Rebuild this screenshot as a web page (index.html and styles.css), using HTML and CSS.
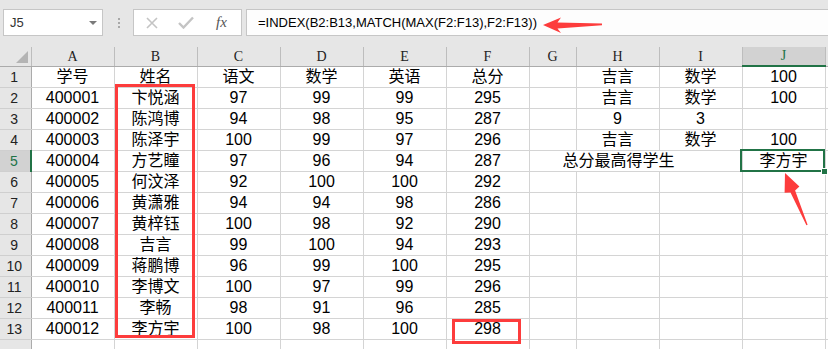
FILE: index.html
```html
<!DOCTYPE html>
<html lang="zh-CN">
<head>
    <meta charset="UTF-8">
    <title>总分最高得学生</title>
    <link rel="stylesheet" href="styles.css">
</head>
<body>
    <div class="toolbar">
        <div class="name-box">
            <span>J5</span>
            <span class="drop"></span>
        </div>
        <div class="grip"><i></i><i></i><i></i></div>
        <div class="fx-buttons">
            <svg class="icon" width="12" height="12" viewBox="0 0 12 12"><path d="M1 1L11 11M11 1L1 11" stroke="#c4c4c4" stroke-width="1.6" fill="none"/></svg>
            <svg class="icon" width="16" height="13" viewBox="0 0 16 13"><path d="M1 7L5.5 11.5L15 1.5" stroke="#c4c4c4" stroke-width="2.4" fill="none"/></svg>
            <span class="fx">fx</span>
        </div>
        <div class="formula">=INDEX(B2:B13,MATCH(MAX(F2:F13),F2:F13))</div>
    </div>

    <table class="sheet">
        <colgroup>
            <col class="c-rh"><col class="c-w"><col class="c-w"><col class="c-w"><col class="c-w"><col class="c-w"><col class="c-w">
            <col class="c-g"><col class="c-w"><col class="c-w"><col class="c-w"><col class="c-w">
        </colgroup>
        <thead>
            <tr>
                <th class="corner"><span class="tri"></span></th>
                <th>A</th><th>B</th><th>C</th><th>D</th><th>E</th><th>F</th><th>G</th><th>H</th><th>I</th><th class="sel-col">J</th><th></th>
            </tr>
        </thead>
        <tbody>
            <tr><td class="rh">1</td><td>学号</td><td>姓名</td><td>语文</td><td>数学</td><td>英语</td><td>总分</td><td></td><td>吉言</td><td>数学</td><td>100</td><td></td></tr>
            <tr><td class="rh">2</td><td>400001</td><td>卞悦涵</td><td>97</td><td>99</td><td>99</td><td>295</td><td></td><td>吉言</td><td>数学</td><td>100</td><td></td></tr>
            <tr><td class="rh">3</td><td>400002</td><td>陈鸿博</td><td>94</td><td>98</td><td>95</td><td>287</td><td></td><td>9</td><td>3</td><td></td><td></td></tr>
            <tr><td class="rh">4</td><td>400003</td><td>陈泽宇</td><td>100</td><td>99</td><td>97</td><td>296</td><td></td><td>吉言</td><td>数学</td><td>100</td><td></td></tr>
            <tr><td class="rh sel-row">5</td><td>400004</td><td>方艺瞳</td><td>97</td><td>96</td><td>94</td><td>287</td><td colspan="3" class="label">总分最高得学生</td><td>李方宇</td><td></td></tr>
            <tr><td class="rh">6</td><td>400005</td><td>何汶泽</td><td>92</td><td>100</td><td>100</td><td>292</td><td></td><td></td><td></td><td></td><td></td></tr>
            <tr><td class="rh">7</td><td>400006</td><td>黄潇雅</td><td>94</td><td>94</td><td>98</td><td>286</td><td></td><td></td><td></td><td></td><td></td></tr>
            <tr><td class="rh">8</td><td>400007</td><td>黄梓钰</td><td>100</td><td>98</td><td>92</td><td>290</td><td></td><td></td><td></td><td></td><td></td></tr>
            <tr><td class="rh">9</td><td>400008</td><td>吉言</td><td>99</td><td>100</td><td>94</td><td>293</td><td></td><td></td><td></td><td></td><td></td></tr>
            <tr><td class="rh">10</td><td>400009</td><td>蒋鹏博</td><td>96</td><td>99</td><td>100</td><td>295</td><td></td><td></td><td></td><td></td><td></td></tr>
            <tr><td class="rh">11</td><td>400010</td><td>李博文</td><td>100</td><td>97</td><td>99</td><td>296</td><td></td><td></td><td></td><td></td><td></td></tr>
            <tr><td class="rh">12</td><td>400011</td><td>李畅</td><td>98</td><td>91</td><td>96</td><td>285</td><td></td><td></td><td></td><td></td><td></td></tr>
            <tr><td class="rh">13</td><td>400012</td><td>李方宇</td><td>100</td><td>98</td><td>100</td><td>298</td><td></td><td></td><td></td><td></td><td></td></tr>
            <tr><td class="rh"></td><td></td><td></td><td></td><td></td><td></td><td></td><td></td><td></td><td></td><td></td><td></td></tr>
        </tbody>
    </table>

    <!-- annotations drawn over the sheet -->
    <div class="mark box-names"></div>
    <div class="mark box-total"></div>
    <div class="selection"><span class="handle"></span></div>
    <svg class="arrows" width="828" height="349" viewBox="0 0 828 349">
        <polygon points="543,25 561,17.5 557.5,22.5 602,23.6 602,25.2 557.5,28.5 561,33" fill="#fd3c3c"/>
        <polygon points="785,173 799.4,186.5 795.1,190.4 807.6,224.7 806.4,225.3 790.5,192.4 784.6,192.7" fill="#fd3c3c"/>
    </svg>
</body>
</html>
```

FILE: styles.css
```css
body {
    margin: 0;
    width: 828px;
    height: 349px;
    overflow: hidden;
    position: relative;
    background-color: #fff;
    font-family: "Liberation Sans", "Noto Sans CJK SC", sans-serif;
    color: #000;
}
/* Formula bar */
.toolbar {
    height: 47px;
    box-sizing: border-box;
    padding-top: 9px;
    background-color: #e6e6e6;
    display: flex;
    align-items: flex-start;
}
.name-box {
    margin-left: 3px;
    width: 100px;
    height: 27px;
    box-sizing: border-box;
    border: 1px solid #c6c6c6;
    background-color: #fff;
    display: flex;
    align-items: center;
    padding-left: 6px;
    font-size: 13px;
    color: #333;
}
.drop {
    margin-left: auto;
    margin-right: 5px;
    border-left: 4px solid transparent;
    border-right: 4px solid transparent;
    border-top: 4px solid #7a7a7a;
}
.grip {
    margin-left: 15px;
    margin-top: 9px;
    display: flex;
    flex-direction: column;
    gap: 2px;
}
.grip i {
    display: block;
    width: 2px;
    height: 2px;
    background-color: #a8a8a8;
}
.fx-buttons {
    margin-left: 13px;
    width: 109px;
    height: 27px;
    box-sizing: border-box;
    border: 1px solid #c6c6c6;
    background-color: #fff;
    display: flex;
    align-items: center;
    padding-left: 12px;
}
.fx-buttons .icon {
    display: block;
}
.fx-buttons .icon + .icon {
    margin-left: 20px;
}
.fx {
    margin-left: 22px;
    font-family: "Liberation Serif", serif;
    font-style: italic;
    font-size: 15px;
    color: #555;
}
.formula {
    margin-left: 4px;
    flex: 1;
    height: 27px;
    box-sizing: border-box;
    border: 1px solid #c6c6c6;
    border-right: none;
    background-color: #fdfdfd;
    padding-left: 11px;
    font-size: 13px;
    line-height: 25px;
    color: #000;
}
/* Sheet grid */
.sheet {
    border-collapse: collapse;
    table-layout: fixed;
    width: 855px;
}
.c-rh { width: 31px; }
.c-w { width: 83px; }
.c-g { width: 47px; }
.sheet th {
    height: 18px;
    padding: 0;
    background-color: #e6e6e6;
    border-right: 1px solid #bdbdbd;
    border-bottom: 1px solid #ababab;
    font-family: "Liberation Serif", serif;
    font-weight: normal;
    font-size: 14px;
    color: #222;
    vertical-align: bottom;
    line-height: 18px;
}
.sheet th.corner {
    position: relative;
}
.tri {
    position: absolute;
    right: 3px;
    bottom: 3px;
    border-left: 12px solid transparent;
    border-bottom: 12px solid #b4b4b4;
}
.sheet th.sel-col {
    background-color: #d2d2d2;
    color: #217346;
    border-bottom: 2px solid #217346;
}
.sheet td {
    height: 20px;
    padding: 0;
    border-right: 1px solid #d4d4d4;
    border-bottom: 1px solid #d4d4d4;
    text-align: center;
    font-size: 16px;
    line-height: 20px;
    white-space: nowrap;
    overflow: hidden;
    vertical-align: bottom;
}
.sheet td.rh {
    background-color: #e6e6e6;
    border-right: 1px solid #ababab;
    border-bottom: 1px solid #cfcfcf;
    font-size: 14px;
    color: #222;
    padding-right: 2px;
}
.sheet td.sel-row {
    background-color: #d2d2d2;
    color: #217346;
    border-right: 2px solid #217346;
}
.sheet td.label {
    padding-right: 34px;
}
/* Overlays */
.mark {
    position: absolute;
    box-sizing: border-box;
    border: 3px solid #fd3c3c;
}
.box-names {
    left: 115px;
    top: 84px;
    width: 80px;
    height: 254px;
}
.box-total {
    left: 452px;
    top: 319px;
    width: 69px;
    height: 25px;
}
.selection {
    position: absolute;
    left: 740px;
    top: 149px;
    width: 85px;
    height: 23px;
    box-sizing: border-box;
    border: 2px solid #217346;
}
.handle {
    position: absolute;
    right: -5px;
    bottom: -5px;
    width: 5px;
    height: 5px;
    background-color: #217346;
    border: 1px solid #fff;
}
.arrows {
    position: absolute;
    left: 0;
    top: 0;
    pointer-events: none;
}
```
